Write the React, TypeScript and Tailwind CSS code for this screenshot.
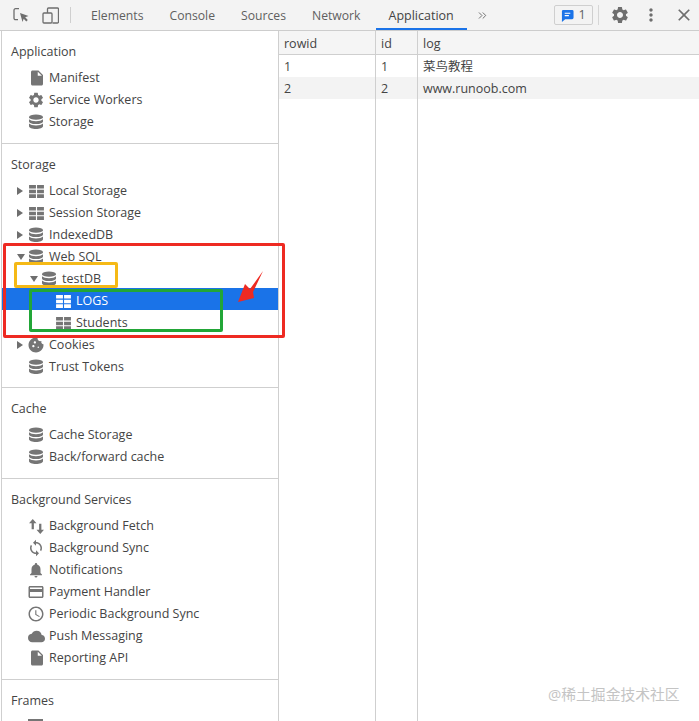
import type { ReactNode } from "react";
import { ChevronsRight } from "lucide-react";
import {
  MdAccessTime,
  MdClose,
  MdCloud,
  MdCookie,
  MdCreditCard,
  MdInsertDriveFile,
  MdMoreVert,
  MdNotifications,
  MdSettings,
  MdSync,
} from "react-icons/md";

const FONT = "font-['Open_Sans','Noto_Sans_CJK_SC',sans-serif]";

/** Stacked cylinders used for every storage entry. */
function DbIcon() {
  return (
    <svg viewBox="0 0 16 16" className="-ml-[1px] h-[16px] w-[16px] text-[#757575]" fill="currentColor" aria-hidden="true">
      <ellipse cx="8" cy="3.2" rx="7" ry="2.6" />
      <path d="M1 5.200c1.200 1.300 3.900 2 7 2s5.800-.7 7-2v2.300c0 1.400-3.100 2.600-7 2.600S1 8.900 1 7.500Z" />
      <path d="M1 9.500c1.200 1.300 3.900 2 7 2s5.800-.7 7-2v2.700c0 1.500-3.100 2.800-7 2.800s-7-1.300-7-2.800Z" />
    </svg>
  );
}

function TableIcon({ className = "text-[#757575]" }: { className?: string }) {
  return (
    <svg viewBox="0 0 16 14" className={`h-[13px] w-[15px] ${className}`} fill="currentColor" aria-hidden="true">
      <path d="M0 0h7.400v3.800H0ZM8.600 0H16v3.800H8.600ZM0 5h7.400v3.800H0ZM8.600 5H16v3.800H8.600ZM0 10h7.400v4H0ZM8.600 10H16v4H8.600Z" />
    </svg>
  );
}

function FetchIcon() {
  return (
    <svg viewBox="0 0 16 16" className="h-[15px] w-[15px] text-[#757575]" fill="currentColor" aria-hidden="true">
      <path d="M4 0 8 4.500H5.200V11H2.800V4.500H0ZM12 16 8 11.500h2.800V5h2.400v6.500H16Z" />
    </svg>
  );
}

function Arrow({ open }: { open?: boolean }) {
  return open ? (
    <span className="h-0 w-0 border-x-[4px] border-t-[6px] border-x-transparent border-t-[#6e6e6e]" />
  ) : (
    <span className="h-0 w-0 border-y-[4px] border-l-[6px] border-y-transparent border-l-[#6e6e6e]" />
  );
}

const gray = "text-[#757575]";

function Row({
  icon,
  label,
  arrow,
  indent = 0,
  selected,
}: {
  icon: ReactNode;
  label: string;
  arrow?: "open" | "closed";
  indent?: number;
  selected?: boolean;
}) {
  return (
    <div
      className={`flex h-[22px] items-center pt-[4px] ${selected ? "bg-[#1a73e8] text-white" : "text-[#444]"}`}
      style={{ paddingLeft: 15 + indent }}
    >
      <span className="flex w-[12px] shrink-0 items-center">
        {arrow && <Arrow open={arrow === "open"} />}
      </span>
      <span className="flex w-[20px] shrink-0 items-center justify-start">{icon}</span>
      <span className="whitespace-nowrap">{label}</span>
    </div>
  );
}

function Section({
  title,
  children,
  last,
  pb = "pb-[10px]",
}: {
  title: string;
  children: ReactNode;
  last?: boolean;
  pb?: string;
}) {
  return (
    <section className={`pt-[10px] ${last ? "" : `border-b border-[#cfcfcf] ${pb}`}`}>
      <h2 className="mb-[2px] flex h-[22px] items-center pl-[9px] text-[#444]">{title}</h2>
      <div className="pb-[2px]">{children}</div>
    </section>
  );
}

const file = <MdInsertDriveFile className={`-ml-[1.500px] h-[18px] w-[18px] ${gray}`} />;

export default function App() {
  return (
    <div className={`relative h-[721px] w-[699px] overflow-hidden bg-white text-[12.5px] ${FONT}`}>
      {/* toolbar */}
      <header className="flex h-[31px] items-center border-b border-[#cdcdcd] bg-[#f3f3f3] pl-[13px] text-[#5f5f5f]">
        <svg viewBox="0 0 16 16" className="h-[16px] w-[16px] text-[#6e6e6e]" fill="none" aria-hidden="true">
          <path d="M6 1.700H2.500A1.500 1.500 0 0 0 1 3.200v8A1.500 1.500 0 0 0 2.500 12.700H5" stroke="currentColor" strokeWidth="1.300" />
          <path d="M7 6l8.500 3-3.300 1.300 2.600 2.800-1.500 1.500-2.600-2.800L9.500 15Z" fill="currentColor" />
        </svg>
        <svg viewBox="0 0 17 17" className="ml-[13px] h-[17px] w-[17px] text-[#6e6e6e]" fill="none" stroke="currentColor" strokeWidth="1.300" aria-hidden="true">
          <path d="M5.500 6V2a1 1 0 0 1 1-1h9a1 1 0 0 1 1 1v13a1 1 0 0 1-1 1h-5" />
          <rect x="1" y="6" width="9" height="10" rx="1" />
        </svg>
        <span className="ml-[11px] h-[16px] w-px bg-[#cfcfcf]" />
        <nav className="ml-[7px] flex h-full items-stretch text-[12.2px]">
          {["Elements", "Console", "Sources", "Network"].map((t) => (
            <span key={t} className="flex items-center px-[13px] pt-[3px]">{t}</span>
          ))}
          <span className="ml-[2px] flex items-center border-b-2 border-[#1a73e8] px-[13px] pt-[5px] text-[12.5px] text-[#444]">Application</span>
        </nav>
        <ChevronsRight className="ml-[9px] h-[13px] w-[13px] text-[#555]" strokeWidth={1.5} />
        <div className="ml-auto flex items-center pr-[5px]">
          <span className="flex h-[20px] w-[39px] items-center justify-center gap-[4px] rounded-[2px] border border-[#cfcfcf]">
            <svg viewBox="0 0 14 14" className="h-[13px] w-[13px] text-[#1a73e8]" fill="currentColor" aria-hidden="true">
              <path d="M2 1h10a1.500 1.500 0 0 1 1.500 1.500v7A1.500 1.500 0 0 1 12 11H4.500L1 14V2.500A1.500 1.500 0 0 1 2 1Z" />
              <path d="M4 4h6v1.200H4ZM4 6.500h4.500v1.200H4Z" fill="#fff" />
            </svg>
            <span>1</span>
          </span>
          <span className="ml-[5px] h-[20px] w-px bg-[#d6d6d6]" />
          <MdSettings className="ml-[11px] h-[20px] w-[20px] text-[#6e6e6e]" />
          <MdMoreVert className="ml-[11px] h-[20px] w-[20px] text-[#6e6e6e]" />
          <MdClose className="ml-[13px] h-[20px] w-[20px] text-[#6e6e6e]" />
        </div>
      </header>

      <div className="flex">
        {/* sidebar */}
        <aside className="ml-[1px] w-[278px] shrink-0 border-x border-[#cfcfcf]">
          <Section title="Application">
            <Row icon={file} label="Manifest" />
            <Row icon={<MdSettings className={`-ml-[2px] h-[18px] w-[18px] ${gray}`} />} label="Service Workers" />
            <Row icon={<DbIcon />} label="Storage" />
          </Section>
          <Section title="Storage" pb="pb-[9px]">
            <Row arrow="closed" icon={<TableIcon />} label="Local Storage" />
            <Row arrow="closed" icon={<TableIcon />} label="Session Storage" />
            <Row arrow="closed" icon={<DbIcon />} label="IndexedDB" />
            <Row arrow="open" icon={<DbIcon />} label="Web SQL" />
            <Row arrow="open" indent={13} icon={<DbIcon />} label="testDB" />
            <Row indent={27} selected icon={<TableIcon className="text-white" />} label="LOGS" />
            <Row indent={27} icon={<TableIcon />} label="Students" />
            <Row arrow="closed" icon={<MdCookie className={`-ml-[2px] h-[18px] w-[18px] ${gray}`} />} label="Cookies" />
            <Row icon={<DbIcon />} label="Trust Tokens" />
          </Section>
          <Section title="Cache">
            <Row icon={<DbIcon />} label="Cache Storage" />
            <Row icon={<DbIcon />} label="Back/forward cache" />
          </Section>
          <Section title="Background Services">
            <Row icon={<FetchIcon />} label="Background Fetch" />
            <Row icon={<MdSync className={`-ml-[2px] h-[18px] w-[18px] ${gray}`} />} label="Background Sync" />
            <Row icon={<MdNotifications className={`-ml-[2px] h-[18px] w-[18px] ${gray}`} />} label="Notifications" />
            <Row icon={<MdCreditCard className={`-ml-[2px] h-[18px] w-[18px] ${gray}`} />} label="Payment Handler" />
            <Row icon={<MdAccessTime className={`-ml-[2px] h-[18px] w-[18px] ${gray}`} />} label="Periodic Background Sync" />
            <Row icon={<MdCloud className={`-ml-[1px] h-[17px] w-[17px] ${gray}`} />} label="Push Messaging" />
            <Row icon={file} label="Reporting API" />
          </Section>
          <Section title="Frames" last>
            <Row icon={<span className="-ml-[1px] h-[16px] w-[15px] bg-[#757575]" />} label="" />
          </Section>
        </aside>

        {/* table */}
        <main className="flex-1 text-[#444]">
          <div className="grid grid-cols-[96px_42px_1fr] [&>div]:flex [&>div]:items-center [&>div]:pl-[5px]">
            <div className="h-[24px] border-b border-[#cfcfcf] bg-[#f5f5f5] pt-[3px]">rowid</div>
            <div className="h-[24px] border-b border-l border-[#cfcfcf] bg-[#f5f5f5] pt-[3px]">id</div>
            <div className="h-[24px] border-b border-l border-[#cfcfcf] bg-[#f5f5f5] pt-[3px]">log</div>
            <div className="h-[22px] pt-[2px]">1</div>
            <div className="h-[22px] border-l border-[#cfcfcf] pt-[2px]">1</div>
            <div className="h-[22px] border-l border-[#cfcfcf] pt-[2px]">菜鸟教程</div>
            <div className="h-[22px] bg-[#f3f3f3] pt-[2px]">2</div>
            <div className="h-[22px] border-l border-[#cfcfcf] bg-[#f3f3f3] pt-[2px]">2</div>
            <div className="h-[22px] border-l border-[#cfcfcf] bg-[#f3f3f3] pt-[2px]">www.runoob.com</div>
            <div className="h-[630px]" />
            <div className="h-[630px] border-l border-[#cfcfcf]" />
            <div className="h-[630px] border-l border-[#cfcfcf]" />
          </div>
        </main>
      </div>

      {/* annotations drawn over the screenshot */}
      <div className="absolute left-[3px] top-[243px] h-[95px] w-[282px] rounded-[2px] border-[3px] border-[#ee2a22]" />
      <div className="absolute left-[14px] top-[262px] h-[26px] w-[104px] rounded-[2px] border-[3px] border-[#f5b916]" />
      <div className="absolute left-[29px] top-[289px] h-[43px] w-[194px] rounded-[2px] border-[3px] border-[#22a637]" />
      <svg viewBox="0 0 28 34" className="absolute left-[237px] top-[270px] h-[34px] w-[28px]" aria-hidden="true">
        <path d="M26 1 16 22l1 6L1 32 8 14l5 5Z" fill="#ee2a22" />
      </svg>
      <span className={`absolute left-[548px] top-[685px] text-[14.8px] leading-[18px] text-[#c4c4c4] ${FONT}`}>@稀土掘金技术社区</span>
    </div>
  );
}
